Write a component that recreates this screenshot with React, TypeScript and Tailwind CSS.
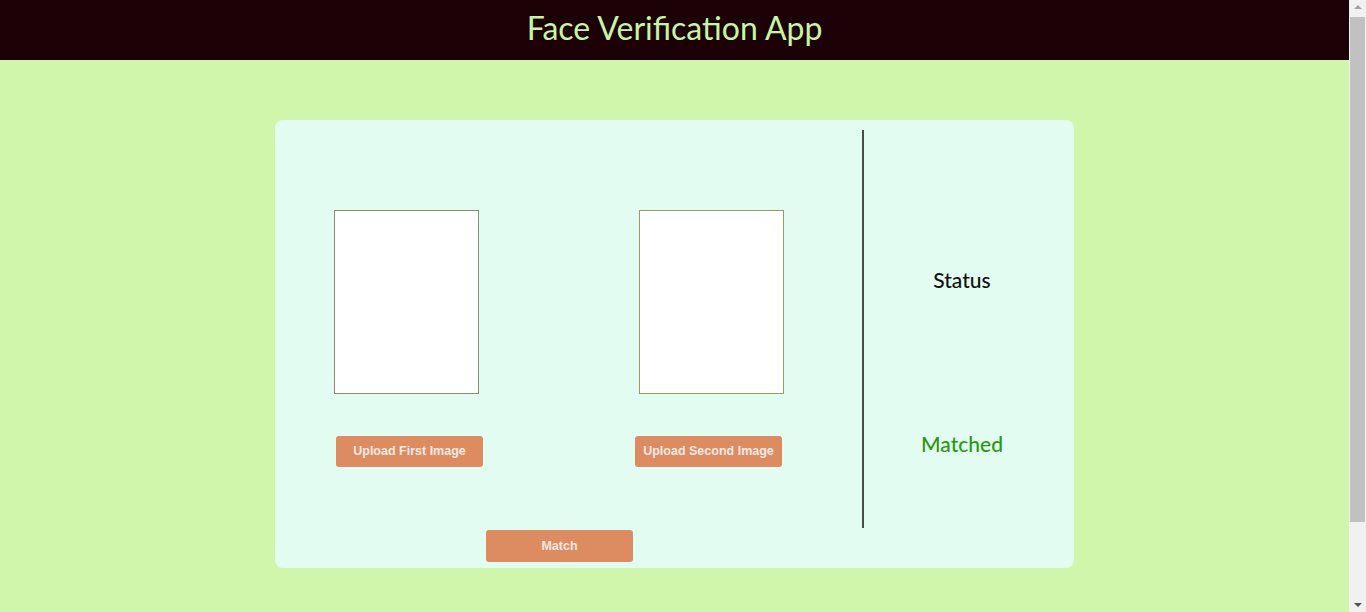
import React from "react";

// Face verification page: header, card with two image slots + status column

const titleFont = { fontFamily: "Lato, 'Open Sans', sans-serif" };

function UploadButton({ label, className }: { label: string; className?: string }) {
  return (
    <button
      className={`h-[31px] w-[147px] rounded-[3px] bg-[#dd8c62] text-[12.5px] font-bold text-[#fbe9e2] ${className ?? ""}`}
      style={{ fontFamily: "'Liberation Sans', Arial, sans-serif" }}
    >
      {label}
    </button>
  );
}

export default function App() {
  return (
    <div className="flex h-[612px] overflow-hidden bg-[#d0f6ac]">
      <div className="flex-1">
        {/* Header */}
        <header className="flex h-[60px] items-center justify-center bg-[#1c0207] pb-[5px]">
          <h1 className="text-[32px] text-[#c9f5a2]" style={titleFont}>
            Face Verification App
          </h1>
        </header>

        {/* Card */}
        <div className="mx-auto mt-[60px] flex h-[448px] w-[799px] rounded-lg bg-[#e2fcf2]">
          {/* Left: images + buttons */}
          <div className="flex w-[587px] flex-col pt-[90px]">
            <div className="flex gap-[152px] pl-[59px]">
              <div className="flex flex-col">
                <div className="h-[184px] w-[145px] border border-[#8b8a6c] bg-white" />
                <UploadButton label="Upload First Image" className="ml-[2px] mt-[42px]" />
              </div>
              <div className="flex flex-col">
                <div className="ml-[4px] h-[184px] w-[145px] border border-[#a09a5a] bg-white" />
                <UploadButton label="Upload Second Image" className="mt-[42px]" />
              </div>
            </div>
            <UploadButton label="Match" className="ml-[211px] mt-[63px] h-[32px]" />
          </div>

          {/* Divider */}
          <div className="mt-[10px] h-[398px] w-[2px] bg-[#4a4a4a]" />

          {/* Right: status */}
          <div className="flex flex-1 flex-col items-center pr-[14px] pt-[148px]" style={titleFont}>
            <p className="text-[21px] font-medium leading-[24px] text-[#111]">Status</p>
            <p className="mt-[140px] text-[21px] font-medium leading-[24px] text-[#2a9612]">Matched</p>
          </div>
        </div>
      </div>

      {/* Scrollbar strip */}
      <div className="flex w-[17px] flex-col items-center bg-[#f1f1f1]">
        <div className="mt-[5px] h-0 w-0 border-x-[4px] border-b-[4px] border-x-transparent border-b-[#a3a3a3]" />
        <div className="mt-[8px] h-[505px] w-[15px] bg-[#c1c1c1]" />
        <div className="mt-auto mb-[5px] h-0 w-0 border-x-[4px] border-t-[4px] border-x-transparent border-t-[#505050]" />
      </div>
    </div>
  );
}
